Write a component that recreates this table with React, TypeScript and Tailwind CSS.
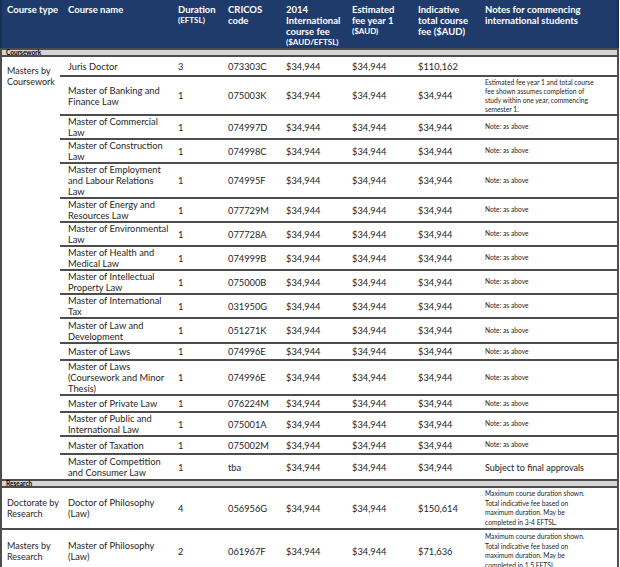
type Row = {
  name: string[]
  dur: string
  code: string
  total: string
  note?: string[]
  bigNote?: boolean
  tight?: boolean
  h: number
}

const fee = '$34,944'
const asAbove = ['Note: as above']

const coursework: Row[] = [
  { name: ['Juris Doctor'], dur: '3', code: '073303C', total: '$110,162', h: 20 },
  {
    name: ['Master of Banking and', 'Finance Law'], dur: '1', code: '075003K', total: fee, h: 39, tight: true,
    note: ['Estimated fee year 1 and total course', 'fee shown assumes completion of', 'study within one year, commencing', 'semester 1.']
  },
  { name: ['Master of Commercial', 'Law'], dur: '1', code: '074997D', total: fee, note: asAbove, h: 24 },
  { name: ['Master of Construction', 'Law'], dur: '1', code: '074998C', total: fee, note: asAbove, h: 24 },
  { name: ['Master of Employment', 'and Labour Relations', 'Law'], dur: '1', code: '074995F', total: fee, note: asAbove, h: 35 },
  { name: ['Master of Energy and', 'Resources Law'], dur: '1', code: '077729M', total: fee, note: asAbove, h: 24 },
  { name: ['Master of Environmental', 'Law'], dur: '1', code: '077728A', total: fee, note: asAbove, h: 24 },
  { name: ['Master of Health and', 'Medical Law'], dur: '1', code: '074999B', total: fee, note: asAbove, h: 23 },
  { name: ['Master of Intellectual', 'Property Law'], dur: '1', code: '075000B', total: fee, note: asAbove, h: 24 },
  { name: ['Master of International', 'Tax'], dur: '1', code: '031950G', total: fee, note: asAbove, h: 23 },
  { name: ['Master of Law and', 'Development'], dur: '1', code: '051271K', total: fee, note: asAbove, h: 25 },
  { name: ['Master of Laws'], dur: '1', code: '074996E', total: fee, note: asAbove, h: 17 },
  { name: ['Master of Laws', '(Coursework and Minor', 'Thesis)'], dur: '1', code: '074996E', total: fee, note: asAbove, h: 35 },
  { name: ['Master of Private Law'], dur: '1', code: '076224M', total: fee, note: asAbove, h: 17 },
  { name: ['Master of Public and', 'International Law'], dur: '1', code: '075001A', total: fee, note: asAbove, h: 24 },
  { name: ['Master of Taxation'], dur: '1', code: '075002M', total: fee, note: asAbove, h: 18 },
  { name: ['Master of Competition', 'and Consumer Law'], dur: '1', code: 'tba', total: fee, note: ['Subject to final approvals'], bigNote: true, h: 24 }
]

const research: (Row & { type: string[] })[] = [
  {
    type: ['Doctorate by', 'Research'], name: ['Doctor of Philosophy', '(Law)'], dur: '4', code: '056956G', total: '$150,614', h: 42,
    note: ['Maximum course duration shown.', 'Total indicative fee based on', 'maximum duration. May be', 'completed in 3-4 EFTSL.']
  },
  {
    type: ['Masters by', 'Research'], name: ['Master of Philosophy', '(Law)'], dur: '2', code: '061967F', total: '$71,636', h: 42,
    note: ['Maximum course duration shown.', 'Total indicative fee based on', 'maximum duration. May be', 'completed in 1.5 EFTSL.']
  }
]

function Lines({ lines }: { lines: string[] }) {
  return (
    <>
      {lines.map((l, i) => (
        <div key={i} className="whitespace-nowrap">{l}</div>
      ))}
    </>
  )
}

const cell = 'align-middle text-[9.3px] leading-[11px] pl-[6px]'
const noteCell = 'align-middle text-[6.7px] leading-[9.5px] pl-[6px]'
const tightNoteCell = 'align-middle text-[6.7px] leading-[9px] pl-[6px]'
const bigNoteCell = 'align-middle text-[9px] leading-[11px] pl-[6px]'
const line = 'border-b-2 border-[#4d4d4d]'

function BodyCells({ row, last }: { row: Row; last?: boolean }) {
  const b = last ? '' : line
  const nc = row.bigNote ? bigNoteCell : row.tight ? tightNoteCell : noteCell
  return (
    <>
      <td className={`${cell} ${b} pl-[8px]`} style={{ height: row.h }}><Lines lines={row.name} /></td>
      <td className={`${cell} ${b}`}>{row.dur}</td>
      <td className={`${cell} ${b}`}>{row.code}</td>
      <td className={`${cell} ${b}`}>{fee}</td>
      <td className={`${cell} ${b}`}>{fee}</td>
      <td className={`${cell} ${b}`}>{row.total}</td>
      <td className={`${nc} ${b} border-r-2 border-r-[#4d4d4d]`}>
        {row.note && <Lines lines={row.note} />}
      </td>
    </>
  )
}

function Band({ label }: { label: string }) {
  return (
    <tr>
      <td colSpan={8} className="h-[9px] bg-[#d6d6d6] border-y-2 border-x-2 border-[#4d4d4d] pl-[4px] text-[6.5px] leading-[5px] font-bold text-black">
        {label}
      </td>
    </tr>
  )
}

export default function App() {
  return (
    <div className="w-[620px] h-[567px] overflow-hidden bg-white font-['Lato',sans-serif] text-[#262626]">
      <table className="w-[619px] table-fixed border-separate border-spacing-0">
        <colgroup>
          <col className="w-[60px]" />
          <col className="w-[112px]" />
          <col className="w-[50px]" />
          <col className="w-[58px]" />
          <col className="w-[66px]" />
          <col className="w-[66px]" />
          <col className="w-[67px]" />
          <col className="w-[140px]" />
        </colgroup>
        <thead>
          <tr className="bg-[#1f3b6c] text-white font-bold text-[9.5px] leading-[11px] align-top">
            <th className="h-[47px] text-left pl-[5px] pt-[4px] border-l-2 border-[#1a2f55]">Course type</th>
            <th className="text-left pl-[8px] pt-[4px]">Course name</th>
            <th className="text-left pl-[6px] pt-[4px]">
              <div>Duration</div>
              <div className="text-[8px]">(EFTSL)</div>
            </th>
            <th className="text-left pl-[6px] pt-[4px]">
              <div>CRICOS</div>
              <div>code</div>
            </th>
            <th className="text-left pl-[6px] pt-[4px]">
              <div>2014</div>
              <div>International</div>
              <div>course fee</div>
              <div className="text-[8px]">($AUD/EFTSL)</div>
            </th>
            <th className="text-left pl-[6px] pt-[4px]">
              <div>Estimated</div>
              <div>fee year 1</div>
              <div className="text-[8px]">($AUD)</div>
            </th>
            <th className="text-left pl-[6px] pt-[4px]">
              <div>Indicative</div>
              <div>total course</div>
              <div>fee ($AUD)</div>
            </th>
            <th className="text-left pl-[6px] pt-[4px] border-r-2 border-[#1a2f55]">
              <div className="whitespace-nowrap">Notes for commencing</div>
              <div className="whitespace-nowrap">international students</div>
            </th>
          </tr>
        </thead>
        <tbody>
          <Band label="Coursework" />
          {coursework.map((row, i) => (
            <tr key={i}>
              {i === 0 && (
                <td rowSpan={coursework.length} className="align-top pl-[5px] pt-[8px] text-[9px] leading-[11px] border-l-2 border-[#4d4d4d]">
                  <div>Masters by</div>
                  <div>Coursework</div>
                </td>
              )}
              <BodyCells row={row} last={i === coursework.length - 1} />
            </tr>
          ))}
          <Band label="Research" />
          {research.map((row, i) => (
            <tr key={i}>
              <td className={`align-middle pl-[5px] text-[9px] leading-[11px] border-l-2 border-[#4d4d4d] ${i === 0 ? line : ''}`}>
                <Lines lines={row.type} />
              </td>
              <BodyCells row={row} last={i === research.length - 1} />
            </tr>
          ))}
        </tbody>
      </table>
    </div>
  )
}
